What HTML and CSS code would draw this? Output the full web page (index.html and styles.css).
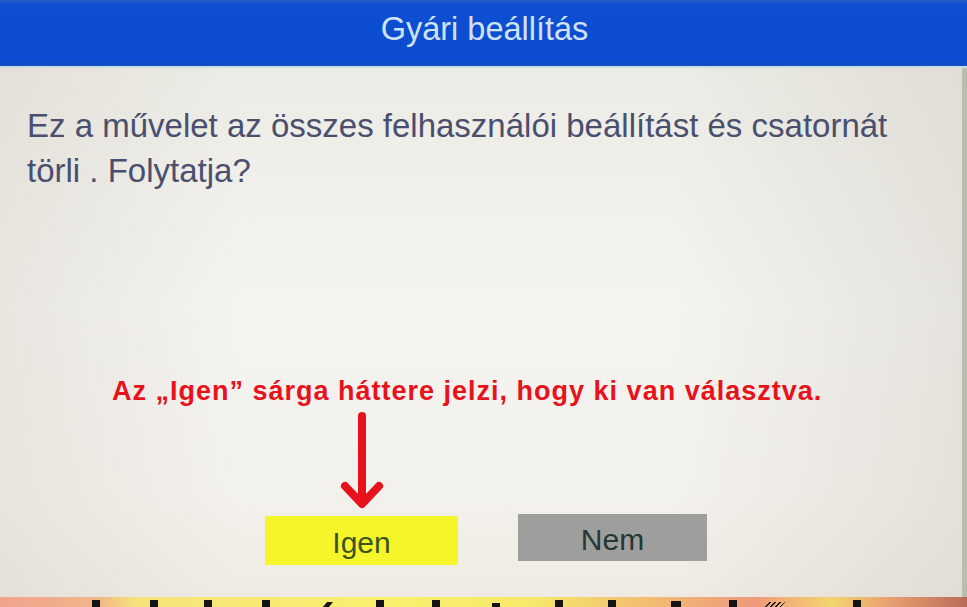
FILE: index.html
```html
<!DOCTYPE html>
<html lang="hu">
<head>
<meta charset="utf-8">
<title>Gyári beállítás</title>
<link rel="stylesheet" href="styles.css">
</head>
<body>
<div class="screen">
  <header class="title-bar">
    <h1 class="title">Gyári beállítás</h1>
  </header>
  <main class="dialog">
    <p class="message">Ez a művelet az összes felhasználói beállítást és csatornát<br>törli . Folytatja?</p>
    <p class="note">Az „Igen” sárga háttere jelzi, hogy ki van választva.</p>
    <div class="arrow-row">
      <svg class="arrow" width="44" height="100" viewBox="0 0 44 100">
        <path d="M22 6 V92" stroke="#e8121c" stroke-width="8" stroke-linecap="round" fill="none"/>
        <path d="M5 76 L22 94 L39 76" stroke="#e8121c" stroke-width="8" stroke-linecap="round" stroke-linejoin="round" fill="none"/>
      </svg>
    </div>
    <div class="buttons">
      <div class="btn btn-yes">Igen</div>
      <div class="btn btn-no">Nem</div>
    </div>
  </main>
  <div class="bottom-strip">
    <span class="mark m1"></span><span class="mark m2"></span><span class="mark m3"></span><span class="mark m4"></span><span class="mark slash"></span><span class="mark m5"></span><span class="mark m6"></span><span class="mark m7"></span><span class="mark m8"></span><span class="mark m9"></span><span class="mark m10"></span><span class="mark m11"></span><span class="mark slash2"></span><span class="mark m12"></span>
  </div>
</div>
</body>
</html>
```
FILE: styles.css
```css
html, body {
  margin: 0;
  padding: 0;
}
body {
  width: 967px;
  height: 607px;
  overflow: hidden;
  font-family: "Liberation Sans", Arial, sans-serif;
}
.screen {
  display: flex;
  flex-direction: column;
  height: 607px;
}
.title-bar {
  height: 66px;
  flex: none;
  background: linear-gradient(180deg, #2a5ec8 0px, #0e4fd2 4px, #0c4cd0 60px, #1450c4 66px);
  border-bottom: 2px solid #c9dbe6;
  box-sizing: content-box;
}
.title {
  margin: 0;
  font-weight: normal;
  font-size: 32.5px;
  line-height: 58px;
  text-align: center;
  color: #cfe2f6;
  padding-left: 2px;
}
.dialog {
  flex: 1;
  display: flex;
  flex-direction: column;
  padding: 35px 0 0 0;
  background:
    linear-gradient(90deg, rgba(210,205,195,0.35) 0%, rgba(255,255,255,0) 25%, rgba(255,255,255,0) 70%, rgba(200,196,186,0.35) 100%),
    linear-gradient(180deg, #ecebe5 0%, #f4f3ef 45%, #f3f1ec 80%, #efebe4 100%);
  border-right: 5px solid #b9bfae;
  overflow: hidden;
}
.message {
  margin: 0 0 0 27px;
  font-size: 33px;
  line-height: 45px;
  color: #4a4f6e;
  white-space: nowrap;
}
.note {
  margin: 183px 0 0 112px;
  font-size: 27px;
  line-height: 31px;
  letter-spacing: 1px;
  font-weight: bold;
  color: #e8121c;
  white-space: nowrap;
}
.arrow-row {
  display: flex;
  padding-left: 340px;
  margin-top: 3px;
  height: 104px;
}
.buttons {
  display: flex;
  align-items: flex-start;
  gap: 60px;
  padding-left: 265px;
}
.btn {
  display: flex;
  align-items: center;
  justify-content: center;
  font-size: 30px;
  padding-top: 4px;
  box-sizing: border-box;
}
.btn-yes {
  width: 193px;
  height: 49px;
  margin-top: 2px;
  background: #f6f52a;
  color: #3d5420;
}
.btn-no {
  width: 189px;
  height: 47px;
  background: #9e9f9c;
  color: #253636;
}
.bottom-strip {
  height: 10px;
  flex: none;
  display: flex;
  align-items: flex-end;
  background: linear-gradient(90deg, #f0a38c 0%, #f2b48a 10%, #f6e27a 14%, #f8f06e 40%, #f6e86a 55%, #f2c070 66%, #ee9a7c 78%, #f4d470 86%, #e8a070 92%, #b86c58 100%);
  overflow: hidden;
}
.mark {
  display: block;
  width: 8px;
  height: 7px;
  background: #141414;
  flex: none;
}
.m1 { margin-left: 92px; }
.m2 { margin-left: 50px; }
.m3 { margin-left: 46px; }
.m4 { margin-left: 50px; }
.slash { margin-left: 55px; width: 6px; height: 5px; transform: skewX(-40deg); }
.m5 { margin-left: 45px; }
.m6 { margin-left: 48px; }
.m7 { margin-left: 52px; height: 4px; }
.m8 { margin-left: 55px; }
.m9 { margin-left: 45px; }
.m10 { margin-left: 55px; width: 10px; height: 6px; }
.m11 { margin-left: 48px; }
.slash2 { margin-left: 30px; width: 16px; height: 5px; background: repeating-linear-gradient(90deg, #141414 0 2px, transparent 2px 5px); transform: skewX(-40deg); }
.m12 { margin-left: 70px; }
```
